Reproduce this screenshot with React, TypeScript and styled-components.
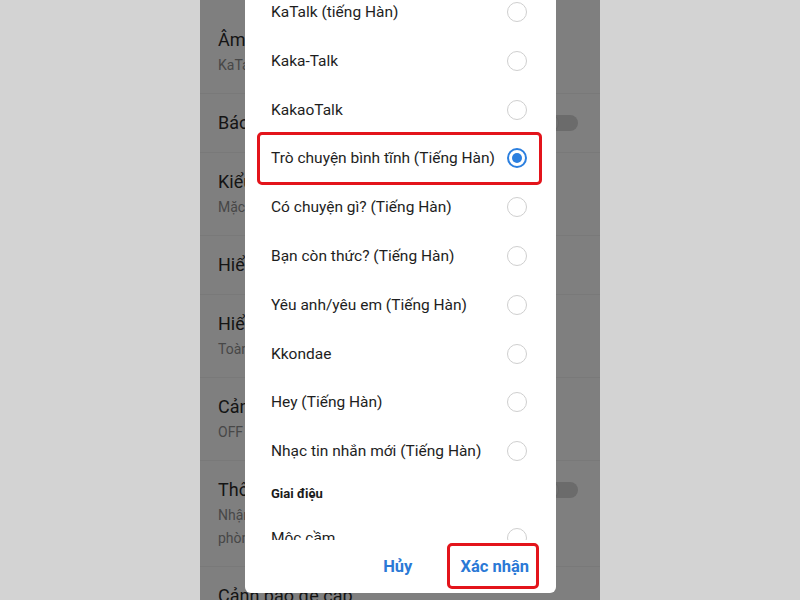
import { createGlobalStyle } from 'styled-components';
import styled from 'styled-components';

const GlobalStyle = createGlobalStyle`
  * { box-sizing: border-box; }
  html, body { margin: 0; padding: 0; }
  body {
    font-family: Roboto, "Noto Sans", "Liberation Sans", sans-serif;
    background: #d3d3d3;
  }
`;

interface ISetting {
  title: string;
  subtitle?: string[];
  toggle?: boolean;
}

const settings: ISetting[] = [
  { title: 'Âm thanh thông báo', subtitle: ['KaTalk (tiếng Hàn)'] },
  { title: 'Báo rung', toggle: true },
  { title: 'Kiểu rung', subtitle: ['Mặc định'] },
  { title: 'Hiển thị xem trước' },
  { title: 'Hiển thị thông báo', subtitle: ['Toàn bộ'] },
  { title: 'Cảnh báo đẩy', subtitle: ['OFF'] },
  {
    title: 'Thông báo trong ứng dụng',
    subtitle: ['Nhận thông báo khi đang trong', 'phòng chat khác Kakao chat.'],
    toggle: true,
  },
  { title: 'Cảnh báo đề cập' },
];

const sounds = [
  'KaTalk (tiếng Hàn)',
  'Kaka-Talk',
  'KakaoTalk',
  'Trò chuyện bình tĩnh (Tiếng Hàn)',
  'Có chuyện gì? (Tiếng Hàn)',
  'Bạn còn thức? (Tiếng Hàn)',
  'Yêu anh/yêu em (Tiếng Hàn)',
  'Kkondae',
  'Hey (Tiếng Hàn)',
  'Nhạc tin nhắn mới (Tiếng Hàn)',
];

const SELECTED = 3;

function App() {
  return (
    <Page>
      <GlobalStyle />
      <Phone>
        <SettingList>
          {settings.map((item) => (
            <SettingRow key={item.title}>
              <SettingText>
                <SettingTitle>{item.title}</SettingTitle>
                {item.subtitle && (
                  <SettingSubs>
                    {item.subtitle.map((line) => (
                      <SettingSub key={line}>{line}</SettingSub>
                    ))}
                  </SettingSubs>
                )}
              </SettingText>
              {item.toggle && (
                <Toggle>
                  <Knob />
                </Toggle>
              )}
            </SettingRow>
          ))}
        </SettingList>

        <Dialog>
          <Scroller>
            <ScrollContent>
              {sounds.map((name, i) => (
                <Option key={name}>
                  <OptionLabel>{name}</OptionLabel>
                  <Radio checked={i === SELECTED} />
                </Option>
              ))}
              <SectionHeader>Giai điệu</SectionHeader>
              <Option>
                <OptionLabel>Mộc cầm</OptionLabel>
                <Radio checked={false} />
              </Option>
            </ScrollContent>
          </Scroller>
          <Actions>
            <ActionBtn>Hủy</ActionBtn>
            <ActionBtn>Xác nhận</ActionBtn>
          </Actions>
          <Highlight style={{ left: 12, top: 132, width: 285, height: 53 }} />
          <Highlight style={{ left: 202, top: 543, width: 92, height: 46 }} />
        </Dialog>
      </Phone>
    </Page>
  );
}

export default App;

const Page = styled.div`
  width: 800px;
  height: 600px;
  display: flex;
  justify-content: center;
  background: #d3d3d3;
  overflow: hidden;
`;

const Phone = styled.div`
  position: relative;
  width: 400px;
  height: 600px;
  background: #7f7f7f;
  overflow: hidden;
`;

const SettingList = styled.div`
  display: flex;
  flex-direction: column;
  padding-top: 11px;
`;

const SettingRow = styled.div`
  display: flex;
  align-items: flex-start;
  justify-content: space-between;
  padding: 16px 22px 16px 18px;
  border-bottom: 1px solid rgba(0, 0, 0, 0.045);
`;

const SettingText = styled.div`
  display: flex;
  flex-direction: column;
  white-space: nowrap;
`;

const SettingTitle = styled.div`
  font-size: 18px;
  line-height: 26px;
  color: #141414;
`;

const SettingSubs = styled.div`
  margin-top: 1px;
`;

const SettingSub = styled.div`
  font-size: 14px;
  line-height: 23px;
  color: #474747;
`;

const Toggle = styled.div`
  position: relative;
  width: 38px;
  height: 16px;
  margin-top: 5px;
  border-radius: 8px;
  background: #6b6b6b;
`;

const Knob = styled.div`
  position: absolute;
  left: -1px;
  top: -2px;
  width: 20px;
  height: 20px;
  border-radius: 50%;
  background: #727272;
  border: 1px solid #666;
`;

const Dialog = styled.div`
  position: absolute;
  left: 45px;
  top: 0;
  width: 311px;
  height: 593px;
  background: #ffffff;
  border-radius: 0 0 6px 6px;
  display: flex;
  flex-direction: column;
`;

const Scroller = styled.div`
  height: 540px;
  flex-shrink: 0;
  overflow: hidden;
`;

const ScrollContent = styled.div`
  margin-top: -12.4px;
  display: flex;
  flex-direction: column;
`;

const Option = styled.div`
  display: flex;
  align-items: center;
  justify-content: space-between;
  height: 48.8px;
  flex-shrink: 0;
  padding: 0 29px 0 26px;
`;

const OptionLabel = styled.span`
  font-size: 15.5px;
  color: #1e1e1e;
  white-space: nowrap;
`;

const Radio = styled.span<{ checked: boolean }>`
  position: relative;
  width: 20px;
  height: 20px;
  flex-shrink: 0;
  border-radius: 50%;
  border: ${(p) => (p.checked ? '2px solid #2b7fdf' : '1.5px solid #cfcfcf')};
  &::after {
    content: '';
    display: ${(p) => (p.checked ? 'block' : 'none')};
    position: absolute;
    left: 3px;
    top: 3px;
    width: 10px;
    height: 10px;
    border-radius: 50%;
    background: #2b7fdf;
  }
`;

const SectionHeader = styled.div`
  height: 36px;
  flex-shrink: 0;
  display: flex;
  align-items: center;
  padding-left: 26px;
  margin-bottom: 2px;
  font-size: 13px;
  font-weight: 700;
  color: #1a1a1a;
`;

const Actions = styled.div`
  flex: 1;
  display: flex;
  align-items: center;
  justify-content: flex-end;
  gap: 28px;
  padding: 0 17px 0 0;
`;

const ActionBtn = styled.button`
  border: 0;
  background: none;
  padding: 0 10px;
  font-family: Roboto, "Noto Sans", "Liberation Sans", sans-serif;
  font-size: 16.5px;
  font-weight: 700;
  color: #2a79d6;
  height: 40px;
`;

const Highlight = styled.div`
  position: absolute;
  border: 3px solid #e3141b;
  border-radius: 5px;
  pointer-events: none;
`;
